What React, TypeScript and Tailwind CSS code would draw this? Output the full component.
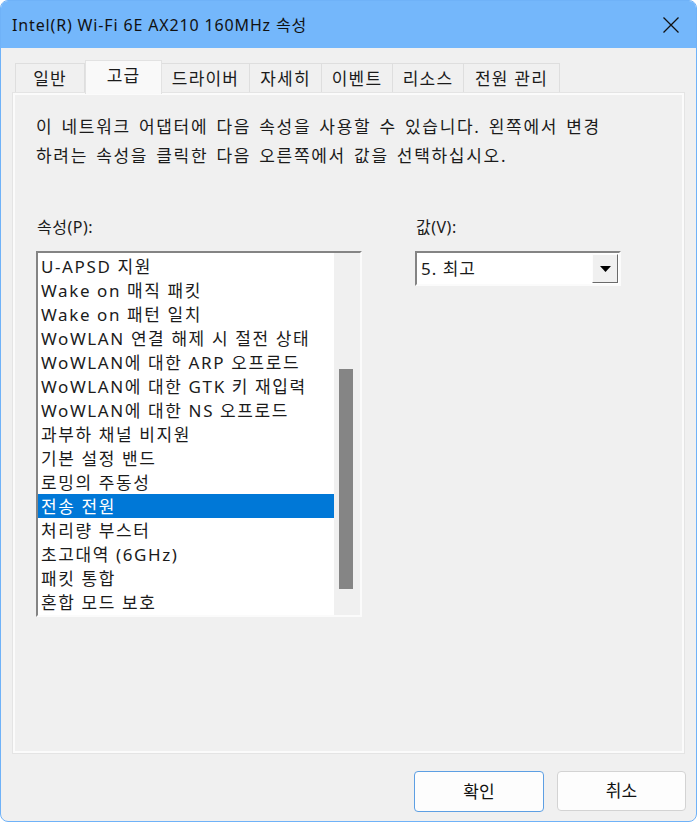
import React from 'react';

const items = [
  'U-APSD 지원',
  'Wake on 매직 패킷',
  'Wake on 패턴 일치',
  'WoWLAN 연결 해제 시 절전 상태',
  'WoWLAN에 대한 ARP 오프로드',
  'WoWLAN에 대한 GTK 키 재입력',
  'WoWLAN에 대한 NS 오프로드',
  '과부하 채널 비지원',
  '기본 설정 밴드',
  '로밍의 주동성',
  '전송 전원',
  '처리량 부스터',
  '초고대역 (6GHz)',
  '패킷 통합',
  '혼합 모드 보호',
];

const tabs = [
  { label: '일반', w: 'w-[70px]' },
  { label: '고급', w: 'w-[77px]', active: true },
  { label: '드라이버', w: 'w-[88px]' },
  { label: '자세히', w: 'w-[72px]' },
  { label: '이벤트', w: 'w-[71px]' },
  { label: '리소스', w: 'w-[71px]' },
  { label: '전원 관리', w: 'w-[96px]' },
];

const font = "font-['Noto_Sans','Noto_Sans_CJK_KR',sans-serif]";

export default function App() {
  return (
    <div className={`w-[697px] h-[822px] flex flex-col overflow-hidden rounded-[8px] border border-[#6fb2f8] bg-[#f0f0f0] text-[#1b1b1b] ${font}`}>
      {/* 제목 표시줄 */}
      <div className="h-[47px] shrink-0 bg-[#74b7fb] flex items-center justify-between pl-[11px] pr-[15px]">
        <span className="text-[16px] tracking-[0.85px] text-[#111]">Intel(R) Wi-Fi 6E AX210 160MHz 속성</span>
        <svg width="18" height="18" viewBox="0 0 18 18" className="mr-[1px]">
          <path d="M1.5 1.5 L16.5 16.5 M16.5 1.5 L1.5 16.5" stroke="#111" strokeWidth="1.3" fill="none" />
        </svg>
      </div>

      <div className="flex-1 flex flex-col pl-[12px] pr-[12px] pt-[12px]">
        {/* 탭 */}
        <div className="h-[33px] flex items-end pl-[2px]">
          {tabs.map(t =>
            t.active ? (
              <div
                key={t.label}
                className={`${t.w} h-[34px] -mb-[1px] relative z-10 flex items-center justify-center bg-[#f9f9f9] border border-b-0 border-[#e2e2e2] text-[17px] tracking-[1.2px] pb-[4px]`}
              >
                {t.label}
              </div>
            ) : (
              <div
                key={t.label}
                className={`${t.w} h-[30px] flex items-center justify-center border border-b-0 border-l-0 first:border-l border-[#dedede] bg-[#f0f0f0] text-[17px] tracking-[1.2px]`}
              >
                {t.label}
              </div>
            )
          )}
        </div>

        {/* 탭 페이지 */}
        <div className="h-[660px] border-2 border-[#fbfbfb] outline outline-1 outline-[#e4e4e4] flex flex-col pl-[21px] pt-[17px]">
          <p className="text-[17px] leading-[29px] tracking-[1.7px] [word-spacing:2px]">
            이 네트워크 어댑터에 다음 속성을 사용할 수 있습니다. 왼쪽에서 변경
            <br />
            하려는 속성을 클릭한 다음 오른쪽에서 값을 선택하십시오.
          </p>

          <div className="flex mt-[45px]">
            {/* 속성 */}
            <div className="w-[326px] flex flex-col">
              <span className="text-[16px] leading-[24px] pl-[1px] tracking-[0.5px]">속성(P):</span>
              <div className="mt-[12px] h-[366px] flex border-2 border-t-[#848484] border-l-[#848484] border-r-[#fbfbfb] border-b-[#fbfbfb] bg-white">
                <div className="flex-1 flex flex-col pt-[1px]">
                  {items.map(it => (
                    <div
                      key={it}
                      className={`h-[24px] shrink-0 flex items-center pl-[3px] text-[17px] leading-none tracking-[1.6px] ${
                        it === '전송 전원' ? 'bg-[#0078d7] text-white' : ''
                      }`}
                    >
                      {it}
                    </div>
                  ))}
                </div>
                <div className="w-[26px] bg-[#f0f0f0] flex flex-col pl-[5px] pt-[116px]">
                  <div className="w-[14px] h-[220px] bg-[#858585]" />
                </div>
              </div>
            </div>

            {/* 값 */}
            <div className="ml-[53px] w-[206px] flex flex-col">
              <span className="text-[16px] leading-[24px] pl-[1px] tracking-[0.5px]">값(V):</span>
              <div className="mt-[12px] h-[35px] flex items-stretch border-2 border-t-[#848484] border-l-[#848484] border-r-[#fbfbfb] border-b-[#fbfbfb] bg-white">
                <div className="flex-1 flex items-center pl-[4px] text-[17px] tracking-[1px]">5. 최고</div>
                <div className="w-[26px] my-[1px] mr-[1px] flex items-center justify-center bg-[#f0f0f0] border border-t-[#fdfdfd] border-l-[#fdfdfd] border-r-[#6a6a6a] border-b-[#6a6a6a]">
                  <svg width="11" height="6" viewBox="0 0 11 6">
                    <path d="M0 0 H11 L5.5 6 Z" fill="#000" />
                  </svg>
                </div>
              </div>
            </div>
          </div>
        </div>

        {/* 버튼 */}
        <div className="mt-[18px] -mr-[2px] flex justify-end gap-[13px]">
          <button className="w-[130px] h-[41px] rounded-[4px] border border-[#5d9fe3] bg-[#fdfdfd] text-[17px] text-[#111]">
            확인
          </button>
          <button className="w-[129px] h-[40px] rounded-[4px] border border-[#d3d3d3] bg-[#fdfdfd] text-[17px] text-[#111]">
            취소
          </button>
        </div>
      </div>
    </div>
  );
}
